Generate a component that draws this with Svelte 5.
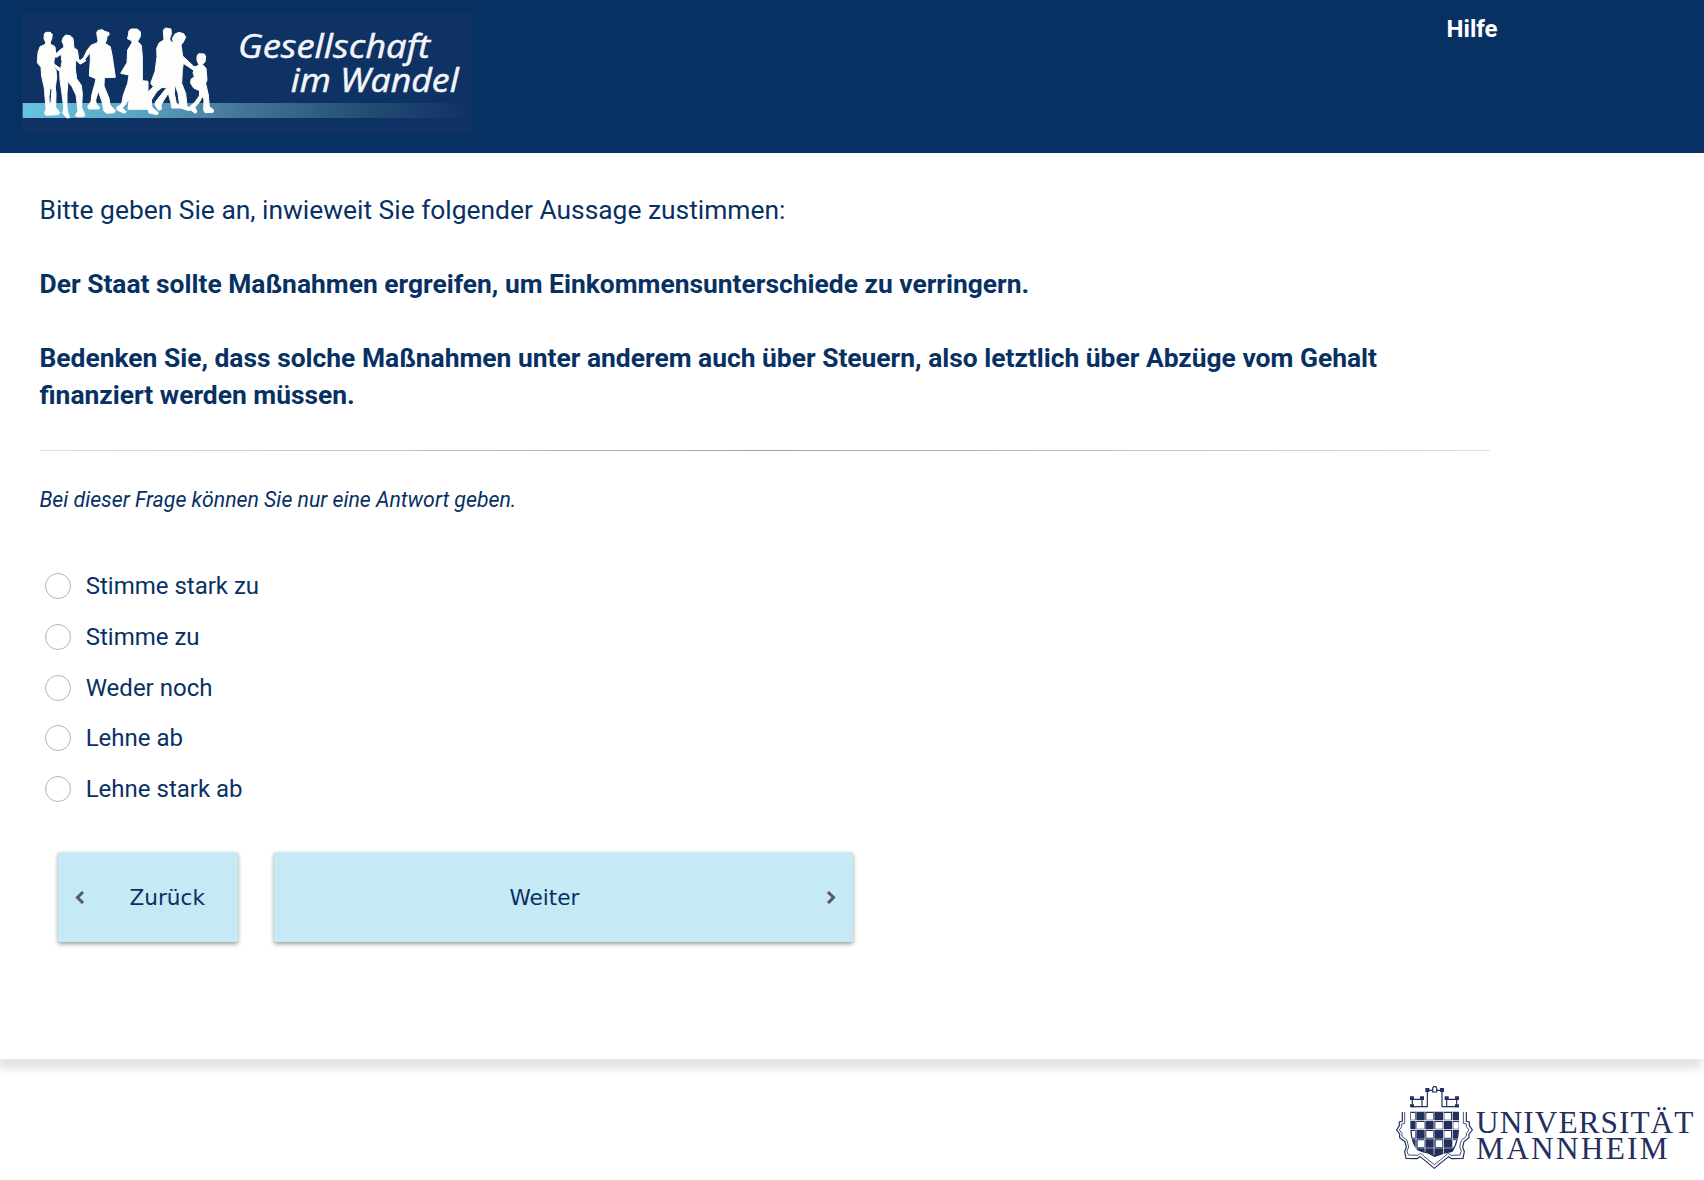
<script>
  const answers = ['Stimme stark zu', 'Stimme zu', 'Weder noch', 'Lehne ab', 'Lehne stark ab'];
  let selected = $state(null);
</script>

<div class="page">
  <header>
    <svg class="logo" viewBox="66 36 1350 366" role="img" aria-label="Gesellschaft im Wandel">
      <defs>
        <linearGradient id="band" x1="0" x2="1" y1="0" y2="0">
          <stop offset="0" stop-color="#67c4dd" />
          <stop offset="0.25" stop-color="#5aa5c3" />
          <stop offset="0.5" stop-color="#447396" />
          <stop offset="0.78" stop-color="#224b73" />
          <stop offset="1" stop-color="#0f3264" />
        </linearGradient>
      </defs>
      <rect x="66" y="36" width="1350" height="366" fill="#0f3264" />
      <rect x="68" y="309" width="1346" height="45" fill="url(#band)" />
      <g class="people" transform="translate(90 60)">
        <path d="M43 41L48 37H61L67 43L65 57L61 66V72L75 80L77 102L75 112L72 122V140L78 150L80 172L76 202L78 222L77 262L90 278L84 284L48 286L43 279L48 268L43 205L35 168L33 142L22 128L24 98L30 80L46 73L47 67L42 56ZM60 206L57 230L58 258L63 246L66 206Z" />
        <path d="M100 52L107 45L120 47L129 55L131 74L132 84L142 90L146 116L150 124L162 116L168 122L152 132L143 126L137 118L136 146L140 176L154 196L157 222L155 262L165 286L160 290H141L136 286L144 272L138 225L126 200L114 184L111 220V262L113 276L119 293L111 294L98 280L101 262L95 215L90 180L89 155L76 143L72 132L92 146L96 125L93 103L80 112L72 106L95 86L102 82L100 73L96 64Z" />
        <path d="M200 38L204 31L218 29L222 33L237 38V46H232L229 62L225 70L241 80L247 110L256 172L223 173L222 198L237 235L240 254L256 272L253 278L231 280L222 274L216 245L205 214L197 240L199 252L209 262L206 267H176L173 260L183 244L186 222L195 190L198 176L178 168L181 118L180 98L160 124L150 131L147 124L160 114L172 90L183 76L202 68L204 62Z" />
      </g>
      <g class="people" transform="translate(345 60)">
        <path d="M42 32L48 27H66L76 35V50L68 64L79 76L82 110V182L99 184V268H39L42 240L22 264L34 276L28 280L6 270L5 262L20 252L25 225L38 190L42 165L17 160L36 128L38 90L51 68L50 62L37 56L40 46Z" />
        <path d="M145 30L152 24L168 27L169 42L164 56L167 65L175 67L172 55L180 42L192 37L206 41L212 52L205 66L198 75L203 108L235 138L246 142L248 150L238 152L205 130L202 150L200 190L212 220L216 258L230 268L222 272L196 264H170L168 250L160 220L150 235L138 255L139 268L131 271L120 256L121 246L140 222L156 202L140 203L125 215L109 240L111 262L130 278L127 284L102 279L98 262L100 215L115 200L107 190L120 155L126 110L125 85L133 68L147 60ZM180 193L178 220L184 250L194 257L189 220Z" />
        <path d="M246 108L251 101L268 102L272 110L270 126L262 133L273 145L276 180L272 190L280 225L283 260L296 270L294 277L270 278L266 270L267 240L262 228L255 244L240 262L246 276L240 280L222 266L226 258L240 246L253 228L254 212L236 204L227 190L228 178L238 170L234 158L240 142L252 134L246 122Z" />
      </g>
      <g class="name" fill="#f4f5f8">
        <text x="714" y="175" textLength="576" lengthAdjust="spacingAndGlyphs">Gesellschaft</text>
        <text x="872" y="277" textLength="504" lengthAdjust="spacingAndGlyphs">im Wandel</text>
      </g>
    </svg>
    <a class="help" href="#hilfe">Hilfe</a>
  </header>

  <main>
    <section class="question">
      <p>Bitte geben Sie an, inwieweit Sie folgender Aussage zustimmen:</p>
      <p class="strong">Der Staat sollte Maßnahmen ergreifen, um Einkommensunterschiede zu verringern.</p>
      <p class="strong">Bedenken Sie, dass solche Maßnahmen unter anderem auch über Steuern, also letztlich über Abzüge vom Gehalt finanziert werden müssen.</p>
    </section>
    <div class="rule"></div>
    <p class="hint">Bei dieser Frage können Sie nur eine Antwort geben.</p>

    <div class="answers">
      {#each answers as answer, i}
        <label>
          <input type="radio" name="answer" value={i} bind:group={selected} />
          <span>{answer}</span>
        </label>
      {/each}
    </div>

    <nav>
      <button class="back">
        <svg viewBox="0 0 10 14"><path d="M8 2L2.500 7.500l5.500 5.500" /></svg>
        <span>Zurück</span>
      </button>
      <button class="next">
        <span>Weiter</span>
        <svg viewBox="0 0 10 14"><path d="M2 2l5.500 5.500l-5.500 5.500" /></svg>
      </button>
    </nav>
  </main>

  <footer>
    <svg class="uni" viewBox="0 0 972 390" role="img" aria-label="Universität Mannheim">
      <g fill="none" stroke="#232f5d" stroke-width="3.5">
        <path d="M93 170h49v-50M186 120v50h49M97 145v25M126 145v25M97 148h29M200 145v25M230 145v25M200 148h30M142 121h44" />
        <path d="M158 126v-12l3-4h6l3 4v12z" fill="#fff" />
        <path d="M67 186v28l-9 2v11l-8 13 9 12v11l16 12 4 17-5 13 4 20 33 1 9-6 19 15 24 20 24-20 19-15 9 6 34-1 4-20-5-13 4-17 15-12v-11l10-12-9-13v-11l-9-2v-28" />
        <path d="M74 186v34l-9 2v8l-7 10 8 10v9l15 12 5 20-5 12 4 12 28 1 9-6 22 19 19 15 19-15 22-19 9 6 27-1 4-12-5-12 5-20 15-12v-9l8-10-8-10v-8l-9-2v-34" stroke-width="2.5" />
      </g>
      <g fill="#232f5d">
        <path d="M90 139h12v11H90zM120 139h12v11h-12zM194 139h12v11h-12zM225 139h12v11h-12zM136 114h12v12h-12zM180 114h12v12h-12zM90 163h12v9H90zM225 163h12v9h-12z" />
        <path d="M91 185h146v48c0 28-7 55-20 73-14 3-25 5-35 9l-18 6-18-9c-10-4-22-4-34-11-14-18-21-38-21-68z" />
      </g>
      <g fill="#fff">
        <path d="M93 189h12v20H93zM139 189h20v20h-20zM193 189h20v20h-20zM110 216h23v20h-23zM166 216h22v20h-22zM220 216h16v20h-16zM139 243h20v20h-20zM193 243h20v20h-20zM95 243h10v20H97zM113 271h20v20h-20zM167 271h20v20h-20zM219 271h10l-7 20h-3z" />
        <path d="M107 185h2v120h-2zM134 185h2v120h-2zM161 185h2v130h-2zM189 185h2v130h-2zM216 185h2v110h-2zM90 211h147v2H90zM90 238h147v2H90zM94 266h140v2H94zM105 293h115v2H105z" />
      </g>
      <g class="uni-name" fill="#232f5d">
        <text x="288" y="248" textLength="652" lengthAdjust="spacing">UNIVERSITÄT</text>
        <text x="288" y="328" textLength="575" lengthAdjust="spacing">MANNHEIM</text>
      </g>
    </svg>
  </footer>
</div>

<style>
  :global(body) {
    margin: 0;
    background: #fff;
  }
  .page {
    box-sizing: border-box;
    height: 1180px;
    display: flex;
    flex-direction: column;
    overflow: hidden;
    font-family: Roboto, sans-serif;
    color: #083163;
    background: #fff;
  }
  header {
    box-sizing: border-box;
    height: 153px;
    flex: none;
    display: flex;
    justify-content: space-between;
    align-items: flex-start;
    padding: 12px 206.5px 0 22px;
    background: #083163;
  }
  .logo {
    width: 450px;
    height: 122px;
  }
  .people {
    fill: #fdfdfb;
    fill-rule: evenodd;
    stroke: #fdfdfb;
    stroke-width: 3;
    stroke-linejoin: round;
  }
  .name {
    font-family: 'Open Sans', sans-serif;
    font-style: italic;
    font-weight: 400;
    font-size: 98px;
    stroke: #f4f5f8;
    stroke-width: 1.5;
  }
  .help {
    margin-top: 2px;
    font-size: 24px;
    line-height: 30px;
    font-weight: 700;
    color: #fff;
    text-decoration: none;
  }
  main {
    box-sizing: border-box;
    height: 906px;
    flex: none;
    padding: 39px 214px 0 39.5px;
    background: #fff;
    box-shadow: -2px 10px 8px rgba(0, 0, 0, 0.11);
  }
  p {
    margin: 0;
  }
  .question {
    display: flex;
    flex-direction: column;
    gap: 37px;
    font-size: 26.4px;
    line-height: 37px;
  }
  .question p:first-child {
    letter-spacing: -0.01px;
  }
  .strong {
    font-weight: 700;
  }
  .rule {
    height: 1px;
    margin-top: 36px;
    background: linear-gradient(90deg, #e0e0e0, #a2a2a2 50%, #e0e0e0);
  }
  .hint {
    margin-top: 34px;
    font-size: 21.28px;
    line-height: 30px;
    font-style: italic;
  }
  .answers {
    display: flex;
    flex-direction: column;
    margin: 45.7px 0 0 5.2px;
  }
  label {
    display: flex;
    align-items: center;
    gap: 15px;
    height: 50.75px;
    font-size: 24px;
    line-height: 30px;
  }
  input {
    appearance: none;
    box-sizing: border-box;
    width: 26px;
    height: 26px;
    margin: 0;
    border: 1px solid #b5b5b5;
    border-radius: 50%;
    background: #fff;
  }
  input:checked {
    border: 8px solid #083163;
  }
  nav {
    display: flex;
    gap: 36px;
    margin: 37.3px 0 0 18.5px;
  }
  button {
    box-sizing: border-box;
    height: 90px;
    display: flex;
    align-items: center;
    border: 0;
    border-radius: 1px;
    padding: 1px 17px 0;
    background: #c5e9f5;
    color: #083163;
    font-family: 'DejaVu Sans', sans-serif;
    font-size: 21.6px;
    box-shadow: 0 2px 4px rgba(0, 0, 0, 0.4);
  }
  button svg {
    width: 10px;
    height: 14px;
    fill: none;
    stroke: #5a5a5a;
    stroke-width: 3;
  }
  .back {
    width: 180px;
  }
  .back span {
    margin-left: 44.5px;
  }
  .next {
    width: 579px;
  }
  .next span {
    flex: 1;
    padding-right: 28px;
    text-align: center;
  }
  footer {
    display: flex;
    justify-content: flex-end;
    margin-top: -9px;
    position: relative;
  }
  .uni {
    width: 324px;
    height: 130px;
    flex: none;
  }
  .uni-name {
    font-family: 'Liberation Serif', serif;
    font-size: 94px;
  }
</style>
